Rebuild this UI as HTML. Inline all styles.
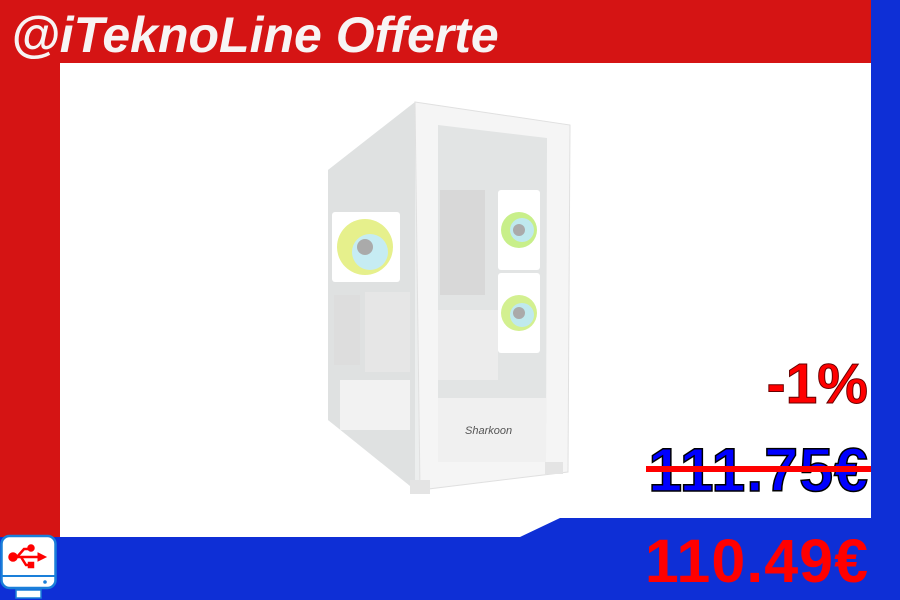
<!DOCTYPE html>
<html><head><meta charset="utf-8"><style>
html,body{margin:0;padding:0}
body{width:900px;height:600px;position:relative;overflow:hidden;background:#fff;font-family:"Liberation Sans",sans-serif}
.abs{position:absolute}
.t{font-weight:bold;white-space:nowrap;line-height:1}
</style></head><body>
<div class="abs" style="left:0;top:0;width:871px;height:63px;background:#d51414"></div>
<div class="abs" style="left:0;top:63px;width:60px;height:480px;background:#d51414"></div>
<div class="abs" style="left:871px;top:0;width:29px;height:600px;background:#0e2fd6"></div>
<svg class="abs" style="left:0;top:0" width="900" height="600"><polygon points="0,537 520,537 560,518 871,518 871,600 0,600" fill="#0e2fd6"/></svg>
<div class="abs t" style="left:11px;top:10px;font-size:50px;font-style:italic;color:#f7f4f4">@iTeknoLine Offerte</div>

<svg class="abs" style="left:310px;top:90px" width="280" height="410" viewBox="0 0 280 410">
<polygon points="18,80 105,12 260,35 258,382 110,400 18,330" fill="#eceeee"/>
<polygon points="18,80 105,12 105,400 18,330" fill="#dfe1e1"/>
<polygon points="105,12 260,35 258,382 110,400" fill="#f5f5f5" stroke="#e0e0e0"/>
<polygon points="128,35 237,48 236,370 128,372" fill="#e2e4e4"/>
<rect x="130" y="100" width="45" height="105" fill="#d8d8d8"/>
<rect x="128" y="220" width="60" height="70" fill="#ececec"/>
<rect x="128" y="308" width="108" height="64" fill="#f0f0f0"/>
<text x="155" y="344" font-size="11" fill="#555" font-family="Liberation Sans" font-style="italic">Sharkoon</text>
<rect x="188" y="100" width="42" height="80" rx="3" fill="#fff"/>
<circle cx="209" cy="140" r="18" fill="#c8ef8a"/><circle cx="212" cy="140" r="12" fill="#bfe9ee"/><circle cx="209" cy="140" r="6" fill="#aaa"/>
<rect x="188" y="183" width="42" height="80" rx="3" fill="#fff"/>
<circle cx="209" cy="223" r="18" fill="#d3f090"/><circle cx="212" cy="225" r="12" fill="#bfe9ee"/><circle cx="209" cy="223" r="6" fill="#aaa"/>
<rect x="22" y="122" width="68" height="70" rx="3" fill="#fff"/>
<circle cx="55" cy="157" r="28" fill="#e6f08c"/><circle cx="60" cy="162" r="18" fill="#c6ecf3"/><circle cx="55" cy="157" r="8" fill="#aaa"/>
<rect x="55" y="202" width="45" height="80" fill="#e6e6e6"/>
<rect x="24" y="205" width="26" height="70" fill="#ddd"/>
<rect x="30" y="290" width="70" height="50" fill="#f2f2f2"/>
<rect x="100" y="390" width="20" height="14" fill="#e4e4e4"/>
<rect x="235" y="372" width="18" height="12" fill="#e4e4e4"/>
</svg>

<div class="abs t" style="right:32px;top:356px;font-size:57px;color:#f00;-webkit-text-stroke:1px #600">-1%</div>
<div class="abs t" style="right:31px;top:440px;font-size:61px;letter-spacing:1px;color:#0000ff;-webkit-text-stroke:1.5px #000">111.75€</div>
<div class="abs" style="left:646px;top:466px;width:225px;height:6px;background:#f00"></div>
<div class="abs t" style="right:31px;top:531px;font-size:61px;letter-spacing:1px;color:#f00">110.49€</div>

<svg class="abs" style="left:0;top:534px" width="60" height="66" viewBox="0 0 60 66">
<rect x="1.5" y="2" width="54" height="52" rx="8" fill="#fff" stroke="#1a7fd9" stroke-width="2.5"/>
<line x1="2" y1="42" x2="55" y2="42" stroke="#1a7fd9" stroke-width="2"/>
<circle cx="45" cy="48" r="1.8" fill="#1a7fd9"/>
<rect x="16" y="56" width="25" height="8" fill="#fff" stroke="#1a7fd9" stroke-width="1.5"/>
<g fill="#f00" stroke="#f00" stroke-width="2.5">
<circle cx="13" cy="23" r="3.5"/>
<line x1="13" y1="23" x2="40" y2="23"/>
<path d="M17 23 L24 15 H30" fill="none"/>
<circle cx="31" cy="14" r="2.5"/>
<path d="M21 23 L26 31 H30" fill="none"/>
<rect x="29" y="29" width="4" height="4"/>
<polygon points="38,19 46,23 38,27" stroke-width="1"/>
</g>
</svg>
</body></html>
